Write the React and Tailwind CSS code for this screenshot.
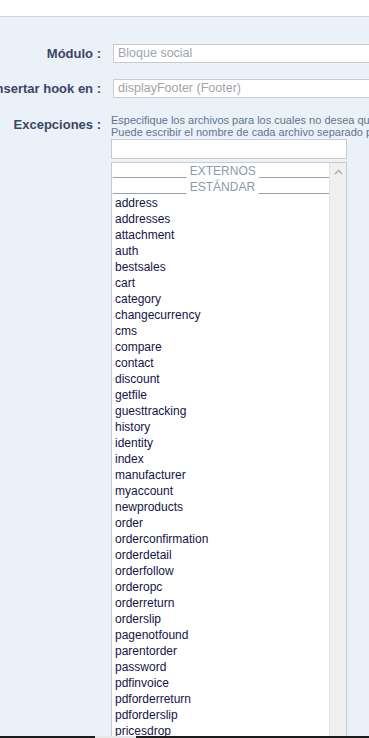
import React from 'react';

const files = [
  'address', 'addresses', 'attachment', 'auth', 'bestsales', 'cart', 'category',
  'changecurrency', 'cms', 'compare', 'contact', 'discount', 'getfile',
  'guesttracking', 'history', 'identity', 'index', 'manufacturer', 'myaccount',
  'newproducts', 'order', 'orderconfirmation', 'orderdetail', 'orderfollow',
  'orderopc', 'orderreturn', 'orderslip', 'pagenotfound', 'parentorder',
  'password', 'pdfinvoice', 'pdforderreturn', 'pdforderslip', 'pricesdrop',
];

const Label = ({ children, className = '' }) => (
  <div className={`w-[101px] shrink-0 flex justify-end whitespace-nowrap text-[13px] font-bold text-[#3d4566] ${className}`}>
    <span>{children}</span>
  </div>
);

const App = () => {
  return (
    <div className="h-[738px] w-[369px] overflow-hidden bg-white font-['Liberation_Sans',Arial,sans-serif] relative">
      <div className="h-[17px] bg-white border-b border-[#c9d5e1]" />
      <div className="bg-[#eaf1f8] h-full pt-[27px]">
        <div className="flex items-center h-[19px]">
          <Label>Módulo :</Label>
          <div className="ml-[12px] flex-1 min-w-[260px] h-[19px] bg-white border border-[#c8ccd0] pl-[4px] text-[12.5px] leading-[17px] text-[#a0a4a8] whitespace-nowrap">
            Bloque social
          </div>
        </div>
        <div className="flex items-center h-[19px] mt-[16px]">
          <Label>Insertar hook en :</Label>
          <div className="ml-[12px] flex-1 min-w-[260px] h-[19px] bg-white border border-[#c8ccd0] pl-[4px] text-[12.5px] leading-[17px] text-[#a0a4a8] whitespace-nowrap">
            displayFooter (Footer)
          </div>
        </div>
        <div className="flex mt-[16px]">
          <Label className="pt-[1px]">Excepciones :</Label>
          <div className="ml-[10px] flex-1 min-w-0">
            <div className="text-[11px] leading-[12px] text-[#64748c] whitespace-nowrap">
              <p>Especifique los archivos para los cuales no desea que se muestre el módulo.</p>
              <p>Puede escribir el nombre de cada archivo separado por una coma.</p>
            </div>
            <div className="mt-[1px] w-[236px] h-[20px] bg-white border border-[#c8ccd0]" />
            <div className="mt-[3px] w-[236px] h-[600px] bg-white border border-[#c8ccd0] flex">
              <div className="flex-1 pl-[1px] pt-[0px] text-[12px] leading-[16px] text-[#14144a] whitespace-nowrap overflow-hidden">
                <div className="text-[#8a9cab]">___________ EXTERNOS ___________</div>
                <div className="text-[#8a9cab]">___________ ESTÁNDAR ___________</div>
                {files.map((f) => (
                  <div key={f} className="pl-[2px]">{f}</div>
                ))}
              </div>
              <div className="w-[17px] shrink-0 bg-[#f0f0f0] border-l border-[#e6e6e6] flex justify-center pt-[6px]">
                <svg width="9" height="6" viewBox="0 0 9 6">
                  <path d="M1 5 L4.5 1.5 L8 5" fill="none" stroke="#b4b4b4" strokeWidth="1.6" />
                </svg>
              </div>
            </div>
          </div>
        </div>
      </div>
      <div className="absolute left-0 bottom-0 w-full h-[2px] bg-[#1c1c1c] flex">
        <div className="ml-[95px] w-[41px] bg-[#e8e8e8]" />
      </div>
    </div>
  );
};

export default App;
